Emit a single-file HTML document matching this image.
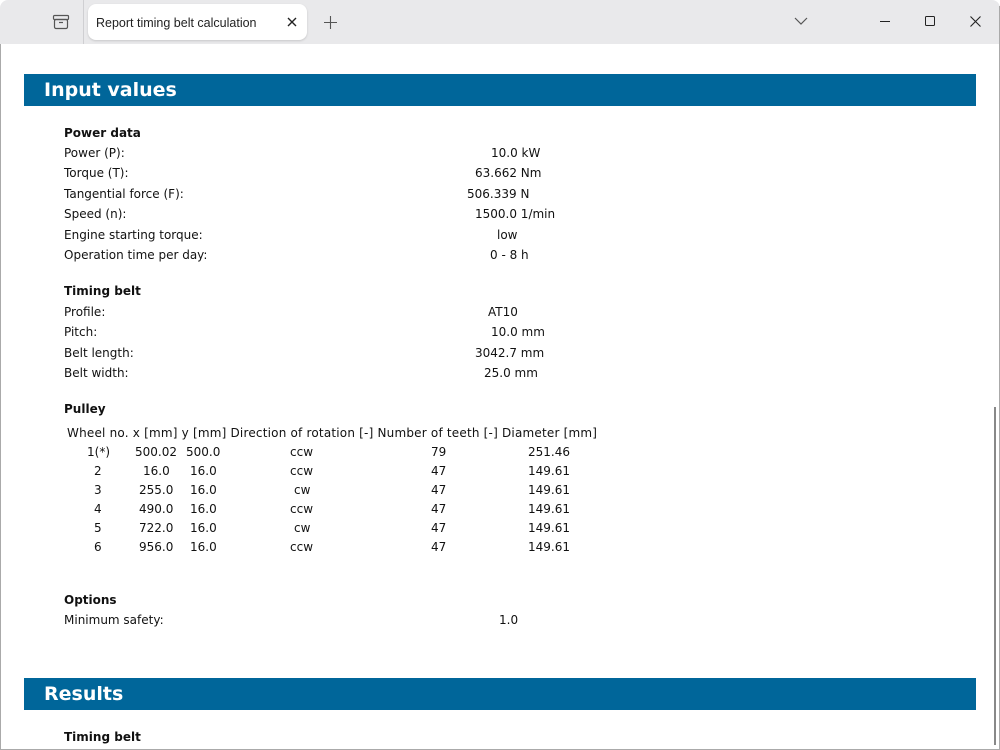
<!DOCTYPE html>
<html><head><meta charset="utf-8"><style>
*{margin:0;padding:0;box-sizing:border-box}
html,body{width:1000px;height:750px;overflow:hidden;background:#fff}
body{position:relative;font-family:"DejaVu Sans","Liberation Sans",sans-serif;font-size:12px;color:#111}
.t{position:absolute;white-space:pre;line-height:16px;margin-top:1px}
.b{font-weight:bold}
.band{position:absolute;left:24px;width:952px;height:32px;background:#00669a;color:#fff;font-weight:bold;font-size:19px;line-height:33px;padding-left:20px}
</style></head><body>
<div style="position:absolute;left:0;top:0;width:1000px;height:44px;background:#e9e9eb;border-top-left-radius:8px;border-top-right-radius:8px"></div>
<div style="position:absolute;left:83px;top:0;width:1px;height:44px;background:#cfcfd2"></div>
<svg style="position:absolute;left:52px;top:13px" width="18" height="18" viewBox="0 0 18 18"><rect x="1.5" y="2.5" width="15" height="4" rx="1" fill="none" stroke="#555" stroke-width="1.2"/><rect x="2.5" y="6.5" width="13" height="9" rx="1.5" fill="none" stroke="#555" stroke-width="1.2"/><line x1="7" y1="9.5" x2="11" y2="9.5" stroke="#555" stroke-width="1.2"/></svg>
<div style="position:absolute;left:88px;top:4px;width:219px;height:36px;background:#fff;border-radius:8px;box-shadow:0 1px 2px rgba(0,0,0,.15)"></div>
<div class="t" style="left:96px;top:14px;font-family:'Liberation Sans',sans-serif;font-size:12.5px;color:#222">Report timing belt calculation</div>
<svg style="position:absolute;left:287px;top:17px" width="10" height="10"><path d="M1 1L9 9M9 1L1 9" stroke="#222" stroke-width="1.4"/></svg>
<svg style="position:absolute;left:324px;top:16px" width="13" height="13"><path d="M6.5 0V13M0 6.5H13" stroke="#555" stroke-width="1.1"/></svg>
<svg style="position:absolute;left:794px;top:17px" width="14" height="8"><path d="M1 1L7 7L13 1" fill="none" stroke="#555" stroke-width="1.2"/></svg>
<div style="position:absolute;left:880px;top:21px;width:10px;height:1px;background:#222"></div>
<div style="position:absolute;left:925px;top:16px;width:10px;height:10px;border:1.2px solid #222;border-radius:1.5px"></div>
<svg style="position:absolute;left:970px;top:16px" width="11" height="11"><path d="M0.5 0.5L10.5 10.5M10.5 0.5L0.5 10.5" stroke="#222" stroke-width="1.1"/></svg>
<div style="position:absolute;right:0;top:6px;width:1px;height:744px;background:#aaa"></div>
<div style="position:absolute;left:0;top:44px;width:1px;height:706px;background:#aaa"></div>
<div style="position:absolute;left:0;bottom:0;width:1000px;height:1px;background:#aaa"></div>
<div style="position:absolute;left:994px;top:407px;width:2px;height:338px;background:#888"></div>

<div class="band" style="top:74px">Input values</div>
<div class="t b" style="left:64px;top:124px">Power data</div>
<div class="t" style="left:64px;top:144px">Power (P):</div><div class="t" style="left:491px;top:144px">10.0 kW</div>
<div class="t" style="left:64px;top:164px">Torque (T):</div><div class="t" style="left:475px;top:164px">63.662 Nm</div>
<div class="t" style="left:64px;top:185px">Tangential force (F):</div><div class="t" style="left:467px;top:185px">506.339 N</div>
<div class="t" style="left:64px;top:205px">Speed (n):</div><div class="t" style="left:475px;top:205px">1500.0 1/min</div>
<div class="t" style="left:64px;top:226px">Engine starting torque:</div><div class="t" style="left:497px;top:226px">low</div>
<div class="t" style="left:64px;top:246px">Operation time per day:</div><div class="t" style="left:490px;top:246px">0 - 8 h</div>

<div class="t b" style="left:64px;top:282px">Timing belt</div>
<div class="t" style="left:64px;top:303px">Profile:</div><div class="t" style="left:488px;top:303px">AT10</div>
<div class="t" style="left:64px;top:323px">Pitch:</div><div class="t" style="left:491px;top:323px">10.0 mm</div>
<div class="t" style="left:64px;top:344px">Belt length:</div><div class="t" style="left:475px;top:344px">3042.7 mm</div>
<div class="t" style="left:64px;top:364px">Belt width:</div><div class="t" style="left:484px;top:364px">25.0 mm</div>

<div class="t b" style="left:64px;top:400px">Pulley</div>
<div class="t" style="left:67px;top:424px;letter-spacing:0.2px">Wheel no. x [mm] y [mm] Direction of rotation [-] Number of teeth [-] Diameter [mm]</div>
<div class="t" style="left:87px;top:443px">1(*)</div><div class="t" style="left:135px;top:443px">500.02</div><div class="t" style="left:186px;top:443px">500.0</div><div class="t" style="left:290px;top:443px">ccw</div><div class="t" style="left:431px;top:443px">79</div><div class="t" style="left:528px;top:443px">251.46</div>
<div class="t" style="left:94px;top:462px">2</div><div class="t" style="left:143px;top:462px">16.0</div><div class="t" style="left:190px;top:462px">16.0</div><div class="t" style="left:290px;top:462px">ccw</div><div class="t" style="left:431px;top:462px">47</div><div class="t" style="left:528px;top:462px">149.61</div>
<div class="t" style="left:94px;top:481px">3</div><div class="t" style="left:139px;top:481px">255.0</div><div class="t" style="left:190px;top:481px">16.0</div><div class="t" style="left:294px;top:481px">cw</div><div class="t" style="left:431px;top:481px">47</div><div class="t" style="left:528px;top:481px">149.61</div>
<div class="t" style="left:94px;top:500px">4</div><div class="t" style="left:139px;top:500px">490.0</div><div class="t" style="left:190px;top:500px">16.0</div><div class="t" style="left:290px;top:500px">ccw</div><div class="t" style="left:431px;top:500px">47</div><div class="t" style="left:528px;top:500px">149.61</div>
<div class="t" style="left:94px;top:519px">5</div><div class="t" style="left:139px;top:519px">722.0</div><div class="t" style="left:190px;top:519px">16.0</div><div class="t" style="left:294px;top:519px">cw</div><div class="t" style="left:431px;top:519px">47</div><div class="t" style="left:528px;top:519px">149.61</div>
<div class="t" style="left:94px;top:538px">6</div><div class="t" style="left:139px;top:538px">956.0</div><div class="t" style="left:190px;top:538px">16.0</div><div class="t" style="left:290px;top:538px">ccw</div><div class="t" style="left:431px;top:538px">47</div><div class="t" style="left:528px;top:538px">149.61</div>

<div class="t b" style="left:64px;top:591px">Options</div>
<div class="t" style="left:64px;top:611px">Minimum safety:</div><div class="t" style="left:499px;top:611px">1.0</div>

<div class="band" style="top:678px">Results</div>
<div class="t b" style="left:64px;top:728px">Timing belt</div>
</body></html>
